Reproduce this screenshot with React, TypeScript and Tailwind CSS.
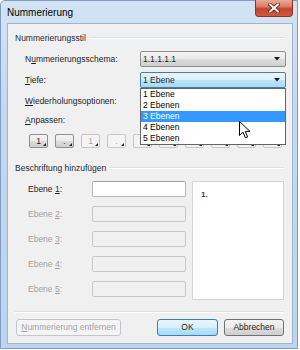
import React from 'react'

const btnGrad =
  'bg-[linear-gradient(#f2f2f2_0%,#ebebeb_50%,#dddddd_51%,#cfcfcf_100%)]'
const blueGrad =
  'bg-[linear-gradient(#eaf6fd_0%,#d9f0fc_50%,#bee6fd_51%,#a7d9f5_100%)]'

function Arrow() {
  return (
    <svg width="6" height="4" viewBox="0 0 6 4" className="shrink-0">
      <path d="M0 0 H6 L3 3.5 Z" fill="#1a1a1a" />
    </svg>
  )
}

function Combo({
  value,
  open,
  children,
}: {
  value: string
  open?: boolean
  children?: React.ReactNode
}) {
  return (
    <div
      className={
        'relative w-[146px] h-[16px] rounded-[2px] border flex items-center pl-[2px] pr-[5px] ' +
        (open ? 'border-[#3c7fb1] ' + blueGrad : 'border-[#8e8f8f] ' + btnGrad)
      }
    >
      <span className="flex-1 leading-none">{value}</span>
      <Arrow />
      {children}
    </div>
  )
}

function Mn({ children }: { children: React.ReactNode }) {
  return <span className="underline underline-offset-[1px]">{children}</span>
}

function Corner() {
  return (
    <svg
      width="3"
      height="3"
      viewBox="0 0 3 3"
      className="absolute right-[1px] bottom-[1px]"
    >
      <path d="M3 0 V3 H0 Z" fill="#222" />
    </svg>
  )
}

// buttons under the open list keep no label, it is covered anyway
function SmallBtn({ label, on }: { label?: string; on: boolean }) {
  return (
    <div
      className={
        'relative w-[19px] h-[14px] rounded-[2px] border flex items-center justify-center leading-none ' +
        (on
          ? 'border-[#8e8f8f] text-[#1e1e1e] ' + btnGrad
          : 'border-[#c3c6c8] bg-[#f4f4f4] text-[#a3a3a3]')
      }
    >
      {label}
      <Corner />
    </div>
  )
}

function Heading({ text }: { text: string }) {
  return (
    <div className="h-[12px] flex items-center pl-[7px] pr-[8px]">
      <span className="leading-none text-[#1e2a3a]">{text}</span>
      <div className="flex-1 ml-[3px] h-[2px] border-t border-[#d5dfe5] border-b-white border-b" />
    </div>
  )
}

function Cursor() {
  return (
    <svg
      width="12"
      height="18"
      viewBox="0 0 12 18"
      className="absolute left-[98px] top-[32px]"
    >
      <path
        d="M0.5 0.5 V14.5 L4 11.2 L6.4 16.8 L8.6 15.9 L6.3 10.4 H11 Z"
        fill="#fff"
        stroke="#000"
        strokeWidth="1"
        strokeLinejoin="round"
      />
    </svg>
  )
}

const levels = ['1 Ebene', '2 Ebenen', '3 Ebenen', '4 Ebenen', '5 Ebenen']

export default function App() {
  return (
    <div className="w-[300px] h-[350px] bg-white font-['Liberation_Sans',Arial,sans-serif] text-[8.5px] text-[#1e1e1e]">
      <div className="w-[298px] h-[349px] flex flex-col border border-[#7f9dc0] rounded-tl-[5px] bg-[linear-gradient(#d3e3f5,#c3d8f0_30%,#bcd4ee)] pl-[6px] pr-[4px] pb-[4px]">
        {/* title bar */}
        <div className="h-[22px] flex items-start justify-between">
          <span className="mt-[7px] text-[10px] leading-none text-black">
            Nummerierung
          </span>
          <div className="-mt-[1px] w-[38px] h-[17px] rounded-b-[4px] border border-[#8b3325] border-t-0 bg-[linear-gradient(#e9a996_0%,#dd7d66_40%,#c7432c_55%,#cf5a40_100%)] flex items-center justify-center">
            <svg width="12" height="10" viewBox="0 0 12 10">
              <path
                d="M2 1.5 L10 8.5 M10 1.5 L2 8.5"
                stroke="#5a1a10"
                strokeWidth="3.6"
                strokeLinecap="square"
              />
              <path
                d="M2 1.5 L10 8.5 M10 1.5 L2 8.5"
                stroke="#fff"
                strokeWidth="2"
                strokeLinecap="square"
              />
            </svg>
          </div>
        </div>

        {/* client area */}
        <div className="flex-1 flex flex-col border border-[#9fb5cf] bg-[#f0f0f0]">
          <div className="mt-[8px]">
            <Heading text="Nummerierungsstil" />
          </div>

          <div className="mt-[7px] flex items-center pl-[17px]">
            <span className="w-[115px] leading-none">
              N<Mn>u</Mn>mmerierungsschema:
            </span>
            <Combo value="1.1.1.1.1" />
          </div>

          <div className="relative z-10 mt-[5px] flex items-center pl-[17px]">
            <span className="w-[115px] leading-none">
              <Mn>T</Mn>iefe:
            </span>
            <Combo value="1 Ebene" open>
              <div className="absolute left-[-1px] top-[15px] w-[146px] h-[57px] border border-[#646464] bg-white flex flex-col">
                {levels.map((l, i) => (
                  <div
                    key={l}
                    className={
                      'h-[11px] flex items-center pl-[2px] leading-none ' +
                      (i === 2 ? 'bg-[#3399ff] text-white' : 'text-black')
                    }
                  >
                    {l}
                  </div>
                ))}
                <Cursor />
              </div>
            </Combo>
          </div>

          <div className="mt-[5px] flex items-center pl-[17px]">
            <span className="w-[115px] leading-none">
              <Mn>W</Mn>iederholungsoptionen:
            </span>
            <Combo value="" />
          </div>

          <div className="mt-[5px] h-[12px] flex items-center pl-[17px]">
            <span className="leading-none">
              <Mn>A</Mn>npassen:
            </span>
          </div>

          <div className="mt-[8px] flex gap-[7px] pl-[21px]">
            <SmallBtn label="1" on />
            <SmallBtn label="." on />
            <SmallBtn label="1" on={false} />
            <SmallBtn label="." on={false} />
            <SmallBtn on={false} />
            <SmallBtn on={false} />
            <SmallBtn on={false} />
            <SmallBtn on={false} />
            <SmallBtn on={false} />
            <SmallBtn on={false} />
          </div>

          <div className="mt-[14px]">
            <Heading text="Beschriftung hinzufügen" />
          </div>

          <div className="mt-[7px] flex pl-[20px]">
            <div className="flex flex-col gap-[9px]">
              {[1, 2, 3, 4, 5].map((n) => (
                <div key={n} className="h-[16px] flex items-center">
                  <span
                    className={
                      'w-[64px] leading-none ' +
                      (n === 1 ? 'text-[#1e1e1e]' : 'text-[#a0a0a0]')
                    }
                  >
                    Ebene <Mn>{n}</Mn>:
                  </span>
                  <div
                    className={
                      'w-[94px] h-[16px] rounded-[2px] border ' +
                      (n === 1
                        ? 'bg-white border-[#b5b8bd] border-t-[#9ea1a6]'
                        : 'bg-[#f0f0f0] border-[#c6c8ca]')
                    }
                  />
                </div>
              ))}
            </div>
            <div className="ml-[6px] w-[92px] h-[119px] bg-white border border-[#d4d4d4] pl-[8px] pt-[6px]">
              <span className="font-bold text-[8px] leading-none text-[#3a3a4a]">
                1.
              </span>
            </div>
          </div>

          <div className="mt-[11px] ml-[7px] mr-[8px] h-[2px] border-t border-[#d5dfe5] border-b border-b-white" />

          <div className="mt-[6px] flex items-center pl-[8px] pr-[8px]">
            <div className="w-[105px] h-[17px] rounded-[3px] border border-[#c3c6c8] bg-[#f4f4f4] text-[#a3a3a3] flex items-center justify-center leading-none">
              <span>
                <Mn>N</Mn>ummerierung entfernen
              </span>
            </div>
            <div className="flex-1" />
            <div
              className={
                'w-[61px] h-[17px] rounded-[3px] border border-[#3c7fb1] flex items-center justify-center leading-none ' +
                blueGrad
              }
            >
              OK
            </div>
            <div
              className={
                'ml-[6px] w-[60px] h-[17px] rounded-[3px] border border-[#707070] flex items-center justify-center leading-none ' +
                btnGrad
              }
            >
              Abbrechen
            </div>
          </div>
        </div>
      </div>
    </div>
  )
}
